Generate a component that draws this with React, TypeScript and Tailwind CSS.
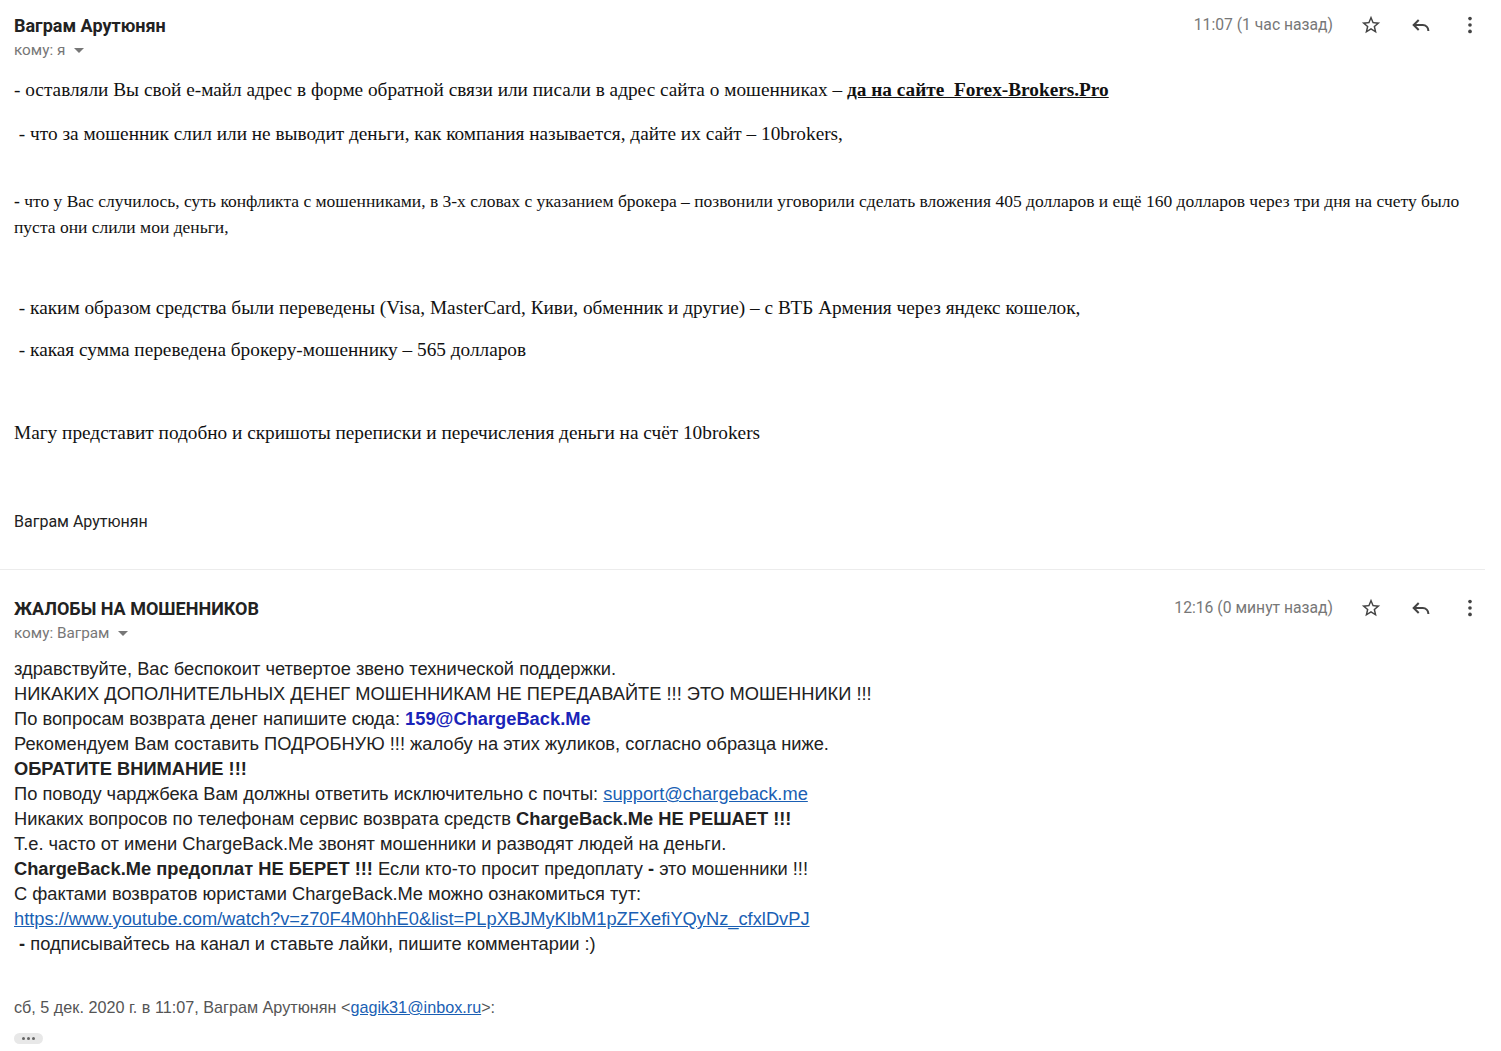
import React from "react";

const StarIcon = () => (
  <svg viewBox="0 0 24 24" className="h-[22px] w-[22px] fill-[#444]">
    <path d="M22 9.24l-7.19-.62L12 2 9.19 8.63 2 9.24l5.46 4.73L5.82 21 12 17.27 18.18 21l-1.63-7.03L22 9.24zM12 15.4l-3.76 2.27 1-4.28-3.32-2.88 4.38-.38L12 6.1l1.71 4.04 4.38.38-3.32 2.88 1 4.28L12 15.4z" />
  </svg>
);

const ReplyIcon = () => (
  <svg viewBox="0 0 24 24" className="h-[22px] w-[22px]" fill="none" stroke="#444" strokeWidth="2.2">
    <path d="M9.5 6.5L4 12l5.5 5.5" />
    <path d="M4.5 12H14a6 6 0 0 1 6 6v0.5" />
  </svg>
);

const MoreIcon = () => (
  <svg viewBox="0 0 24 24" className="h-[22px] w-[22px] fill-[#444]">
    <circle cx="12" cy="5" r="2" />
    <circle cx="12" cy="12" r="2" />
    <circle cx="12" cy="19" r="2" />
  </svg>
);

const Caret = () => (
  <span className="ml-[9px] inline-block h-0 w-0 border-x-[5px] border-t-[5px] border-x-transparent border-t-[#777] align-middle" />
);

const Header = ({ name, to, time }: { name: string; to: string; time: string }) => (
  <div className="font-['Roboto',sans-serif]">
    <div className="flex h-[22px] items-center justify-between">
      <div className="text-[18px] font-bold text-[#222]">{name}</div>
      <div className="flex items-center">
        <span className="text-[15.7px] text-[#777]">{time}</span>
        <div className="ml-[27px] flex w-[22px] justify-center"><StarIcon /></div>
        <div className="ml-[28px] flex w-[22px] justify-center"><ReplyIcon /></div>
        <div className="ml-[27px] mr-[20px] flex w-[22px] justify-center"><MoreIcon /></div>
      </div>
    </div>
    <div className="mt-[4px] flex h-[20px] items-center text-[15.3px] text-[#777]">
      {to}
      <Caret />
    </div>
  </div>
);

const serif = "font-['Liberation_Serif',serif] text-[19.3px] leading-[24px] text-[#111] whitespace-nowrap";
const times = "font-['Liberation_Serif',serif] text-[17.5px] leading-[26px] text-[#111] whitespace-nowrap";

export default function App() {
  return (
    <div className="min-h-[1051px] w-[1501px] bg-white pl-[14px]">
      <div className="pt-[14px]">
        <Header name="Ваграм Арутюнян" to="кому: я" time="11:07 (1 час назад)" />
      </div>

      <p className={`mt-[18px] ${serif}`}>
        - оставляли Вы свой е-майл адрес в форме обратной связи или писали в адрес сайта о мошенниках –{" "}
        <span className="font-bold underline">да на сайте &nbsp;Forex-Brokers.Pro</span>
      </p>
      <p className={`mt-[20px] ${serif}`}>&nbsp;- что за мошенник слил или не выводит деньги, как компания называется, дайте их сайт – 10brokers,</p>
      <div className={`mt-[42px] ${times}`}>
        <div>
          <b>-</b> что у Вас случилось, суть конфликта с мошенниками, в 3-х словах с указанием брокера – позвонили уговорили сделать вложения 405 долларов и ещё 160 долларов через три дня на счету было
        </div>
        <div>пуста они слили мои деньги,</div>
      </div>
      <p className={`mt-[56px] ${serif}`}>&nbsp;- каким образом средства были переведены (Visa, MasterCard, Киви, обменник и другие) – с ВТБ Армения через яндекс кошелок,</p>
      <p className={`mt-[18px] ${serif}`}>&nbsp;- какая сумма переведена брокеру-мошеннику – 565 долларов</p>
      <p className={`mt-[59px] ${serif}`}>Магу представит подобно и скришоты переписки и перечисления деньги на счёт 10brokers</p>
      <p className="mt-[67px] font-['Roboto',sans-serif] text-[16px] leading-[20px] text-[#222]">Ваграм Арутюнян</p>

      <div className="-ml-[14px] mt-[37px] h-px w-[1485px] bg-[#ececec]" />

      <div className="mt-[27px]">
        <Header name="ЖАЛОБЫ НА МОШЕННИКОВ" to="кому: Ваграм" time="12:16 (0 минут назад)" />
      </div>

      <div className="mt-[13px] whitespace-nowrap font-['Liberation_Sans',sans-serif] text-[18.3px] leading-[25px] text-[#222]">
        <div>здравствуйте, Вас беспокоит четвертое звено технической поддержки.</div>
        <div>НИКАКИХ ДОПОЛНИТЕЛЬНЫХ ДЕНЕГ МОШЕННИКАМ НЕ ПЕРЕДАВАЙТЕ !!! ЭТО МОШЕННИКИ !!!</div>
        <div>
          По вопросам возврата денег напишите сюда: <b className="text-[#1a24b8]">159@ChargeBack.Me</b>
        </div>
        <div>Рекомендуем Вам составить ПОДРОБНУЮ !!! жалобу на этих жуликов, согласно образца ниже.</div>
        <div className="font-bold">ОБРАТИТЕ ВНИМАНИЕ !!!</div>
        <div>
          По поводу чарджбека Вам должны ответить исключительно с почты:{" "}
          <span className="text-[#1a5fb4] underline">support@chargeback.me</span>
        </div>
        <div>
          Никаких вопросов по телефонам сервис возврата средств <b>ChargeBack.Me НЕ РЕШАЕТ !!!</b>
        </div>
        <div>Т.е. часто от имени ChargeBack.Me звонят мошенники и разводят людей на деньги.</div>
        <div>
          <b>ChargeBack.Me предоплат НЕ БЕРЕТ !!!</b> Если кто-то просит предоплату <b>-</b> это мошенники !!!
        </div>
        <div>С фактами возвратов юристами ChargeBack.Me можно ознакомиться тут:</div>
        <div>
          <span className="text-[#1a5fb4] underline">https://www.youtube.com/watch?v=z70F4M0hhE0&amp;list=PLpXBJMyKlbM1pZFXefiYQyNz_cfxlDvPJ</span>
        </div>
        <div>
          &nbsp;<b>-</b> подписывайтесь на канал и ставьте лайки, пишите комментарии :)
        </div>
      </div>

      <p className="mt-[41px] font-['Liberation_Sans',sans-serif] text-[16.2px] leading-[20px] text-[#555]">
        сб, 5 дек. 2020 г. в 11:07, Ваграм Арутюнян &lt;<span className="text-[#1a5fb4] underline">gagik31@inbox.ru</span>&gt;:
      </p>
      <div className="mt-[16px] flex h-[11px] w-[29px] items-center justify-center gap-[2px] rounded-[6px] bg-[#e8e8e8]">
        <span className="h-[3px] w-[3px] rounded-full bg-[#666]" />
        <span className="h-[3px] w-[3px] rounded-full bg-[#666]" />
        <span className="h-[3px] w-[3px] rounded-full bg-[#666]" />
      </div>
    </div>
  );
}
